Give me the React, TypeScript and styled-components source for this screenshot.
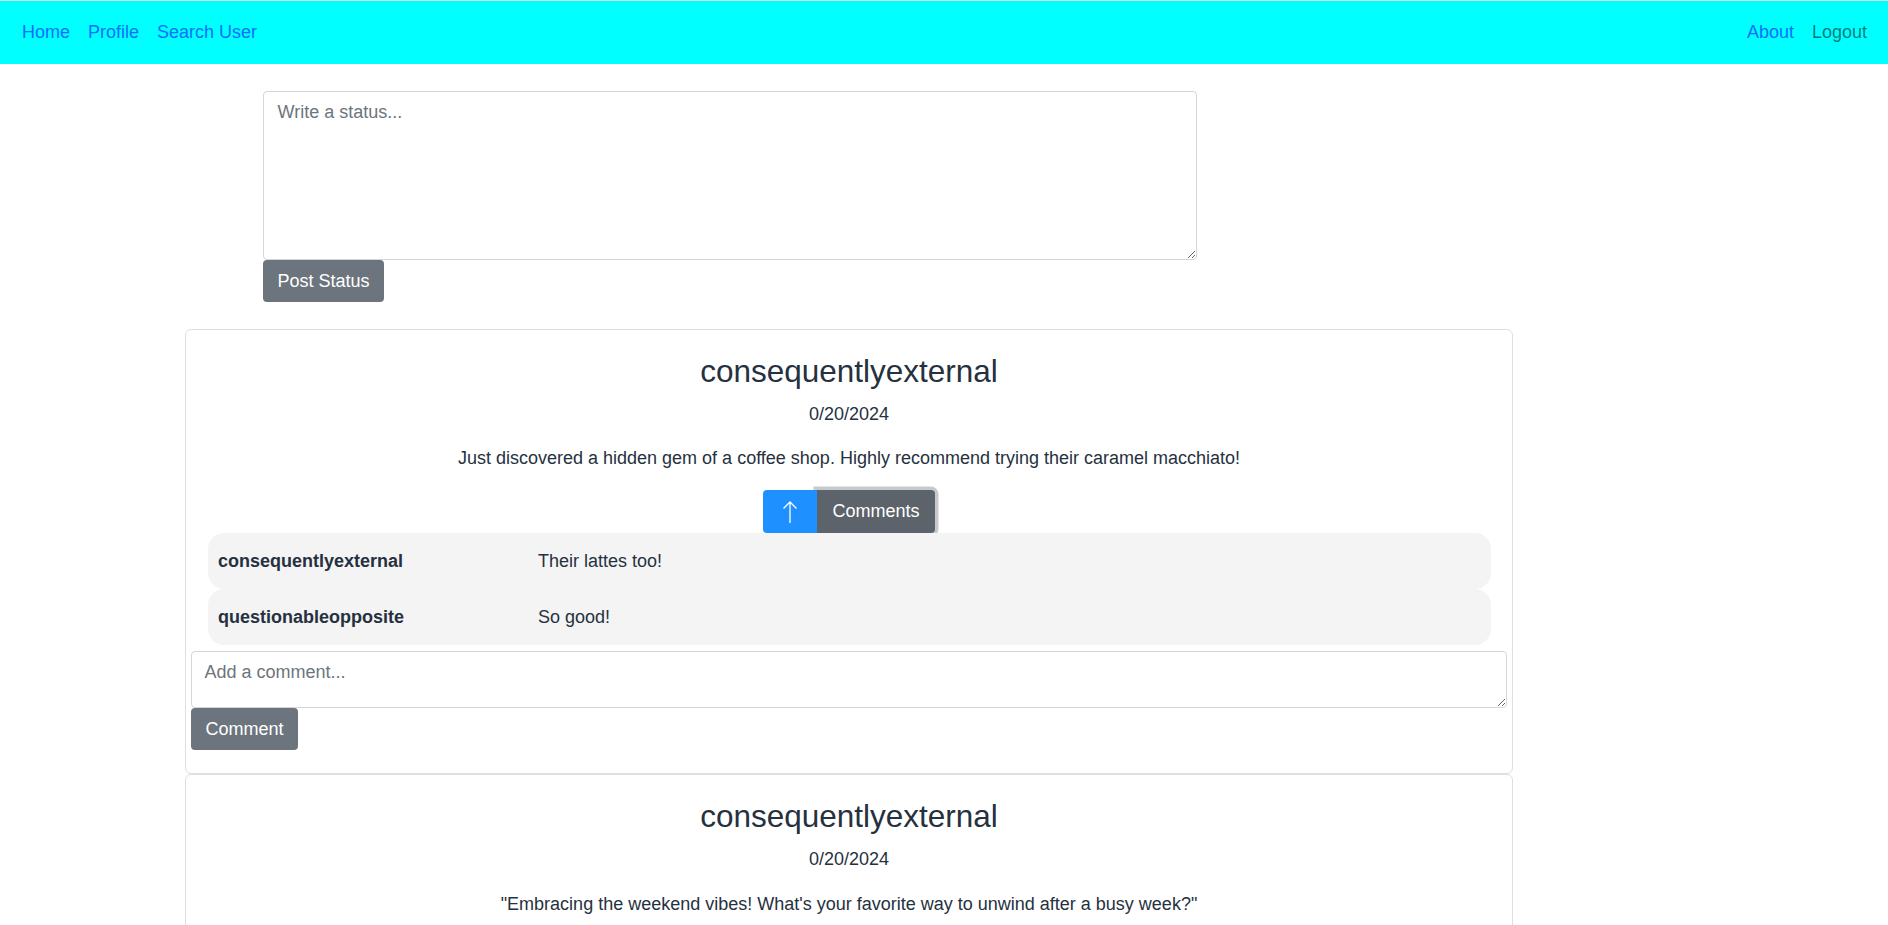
import styled, { createGlobalStyle } from 'styled-components';

const GlobalStyle = createGlobalStyle`
  html, body {
    margin: 0;
    padding: 0;
    background: #fff;
    font-family: "Liberation Sans", Arial, sans-serif;
    font-size: 18px;
    color: #263140;
  }
  * {
    box-sizing: border-box;
  }
`;

const NavBar = styled.nav`
  display: flex;
  justify-content: space-between;
  align-items: center;
  height: 64px;
  padding: 0 12px 0 13px;
  background: #00ffff;
  border-top: 1px solid #dcdcdc;
`;

const NavGroup = styled.div`
  display: flex;
  align-items: center;
`;

const NavLink = styled.a<{ $muted?: boolean }>`
  padding: 0 9px;
  font-size: 18px;
  line-height: 27px;
  color: ${(p) => (p.$muted ? 'rgba(0, 0, 0, 0.55)' : '#0d6efd')};
  text-decoration: none;
  cursor: pointer;
`;

const Main = styled.main`
  padding-top: 27px;
`;

const StatusForm = styled.form`
  display: flex;
  flex-direction: column;
  align-items: flex-start;
  width: 934px;
  margin: 0 0 27px 263px;
`;

const StatusInput = styled.textarea`
  display: block;
  width: 100%;
  height: 169px;
  padding: 6.75px 13.5px;
  font-family: inherit;
  font-size: 18px;
  line-height: 27px;
  color: #263140;
  border: 1px solid #d3d6da;
  border-radius: 4px;
  &::placeholder {
    color: #6c757d;
  }
`;

const GrayButton = styled.button`
  height: 42px;
  padding: 0 14.5px;
  font-family: inherit;
  font-size: 18px;
  color: #fff;
  background: #6c757d;
  border: none;
  border-radius: 4px;
  cursor: pointer;
`;

const Card = styled.article`
  width: 1328px;
  margin-left: 185px;
  padding: 5px 5px 23px;
  border: 1px solid #dfdfdf;
  border-radius: 6px;
`;

const Author = styled.h3`
  margin: 18px 0 10px;
  font-size: 31.5px;
  line-height: 1.2;
  font-weight: 400;
  text-align: center;
`;

const Text = styled.p<{ $gap: number }>`
  margin: 0 0 ${(p) => p.$gap}px;
  font-size: 18px;
  line-height: 27px;
  text-align: center;
`;

const ButtonGroup = styled.div`
  display: flex;
  justify-content: center;
  height: 43px;
`;

const ArrowButton = styled.button`
  position: relative;
  z-index: 1;
  display: flex;
  align-items: center;
  justify-content: center;
  width: 54px;
  height: 43px;
  padding: 0;
  background: #1e90ff;
  border: none;
  border-radius: 4px 0 0 4px;
  cursor: pointer;
`;

const ToggleButton = styled.button`
  height: 43px;
  padding: 0 15px;
  font-family: inherit;
  font-size: 18px;
  color: #fff;
  background: #5c636a;
  border: none;
  border-radius: 0 4px 4px 0;
  box-shadow: 0 0 0 3.5px rgba(130, 138, 145, 0.45);
  cursor: pointer;
`;

const CommentList = styled.div`
  display: flex;
  flex-direction: column;
  margin: 0 16px 6px 17px;
`;

const CommentRow = styled.div`
  display: grid;
  grid-template-columns: 320px 1fr;
  align-items: center;
  height: 56px;
  padding: 0 10px;
  font-size: 18px;
  background: #f4f4f4;
  border-radius: 16px;
`;

const CommentAuthor = styled.strong`
  font-weight: 700;
`;

const CommentInput = styled.textarea`
  display: block;
  width: 100%;
  height: 57px;
  padding: 6.75px 12.5px;
  font-family: inherit;
  font-size: 18px;
  line-height: 27px;
  color: #263140;
  border: 1px solid #d3d6da;
  border-radius: 4px;
  &::placeholder {
    color: #6c757d;
  }
`;

function UpArrow() {
  return (
    <svg width="16" height="24" viewBox="0 0 16 24" fill="none">
      <path d="M8 2V23M1.5 8.5L8 2L14.5 8.5" stroke="#fff" strokeWidth="1.3" />
    </svg>
  );
}

type Comment = { user: string; text: string };

type Post = {
  user: string;
  date: string;
  content: string;
  open: boolean;
  comments: Comment[];
};

const posts: Post[] = [
  {
    user: 'consequentlyexternal',
    date: '0/20/2024',
    content: 'Just discovered a hidden gem of a coffee shop. Highly recommend trying their caramel macchiato!',
    open: true,
    comments: [
      { user: 'consequentlyexternal', text: 'Their lattes too!' },
      { user: 'questionableopposite', text: 'So good!' },
    ],
  },
  {
    user: 'consequentlyexternal',
    date: '0/20/2024',
    content: '"Embracing the weekend vibes! What\'s your favorite way to unwind after a busy week?"',
    open: false,
    comments: [],
  },
];

function PostCard({ post }: { post: Post }) {
  return (
    <Card>
      <Author>{post.user}</Author>
      <Text $gap={17.5}>{post.date}</Text>
      <Text $gap={18}>{post.content}</Text>
      <ButtonGroup>
        <ArrowButton type="button">
          <UpArrow />
        </ArrowButton>
        <ToggleButton type="button">Comments</ToggleButton>
      </ButtonGroup>
      {post.open && (
        <>
          <CommentList>
            {post.comments.map((c, i) => (
              <CommentRow key={i}>
                <CommentAuthor>{c.user}</CommentAuthor>
                <span>{c.text}</span>
              </CommentRow>
            ))}
          </CommentList>
          <CommentInput placeholder="Add a comment..." />
          <GrayButton type="button">Comment</GrayButton>
        </>
      )}
    </Card>
  );
}

export default function App() {
  return (
    <>
      <GlobalStyle />
      <NavBar>
        <NavGroup>
          <NavLink>Home</NavLink>
          <NavLink>Profile</NavLink>
          <NavLink>Search User</NavLink>
        </NavGroup>
        <NavGroup>
          <NavLink>About</NavLink>
          <NavLink $muted>Logout</NavLink>
        </NavGroup>
      </NavBar>
      <Main>
        <StatusForm onSubmit={(e) => e.preventDefault()}>
          <StatusInput placeholder="Write a status..." />
          <GrayButton type="submit">Post Status</GrayButton>
        </StatusForm>
        {posts.map((p, i) => (
          <PostCard key={i} post={p} />
        ))}
      </Main>
    </>
  );
}
